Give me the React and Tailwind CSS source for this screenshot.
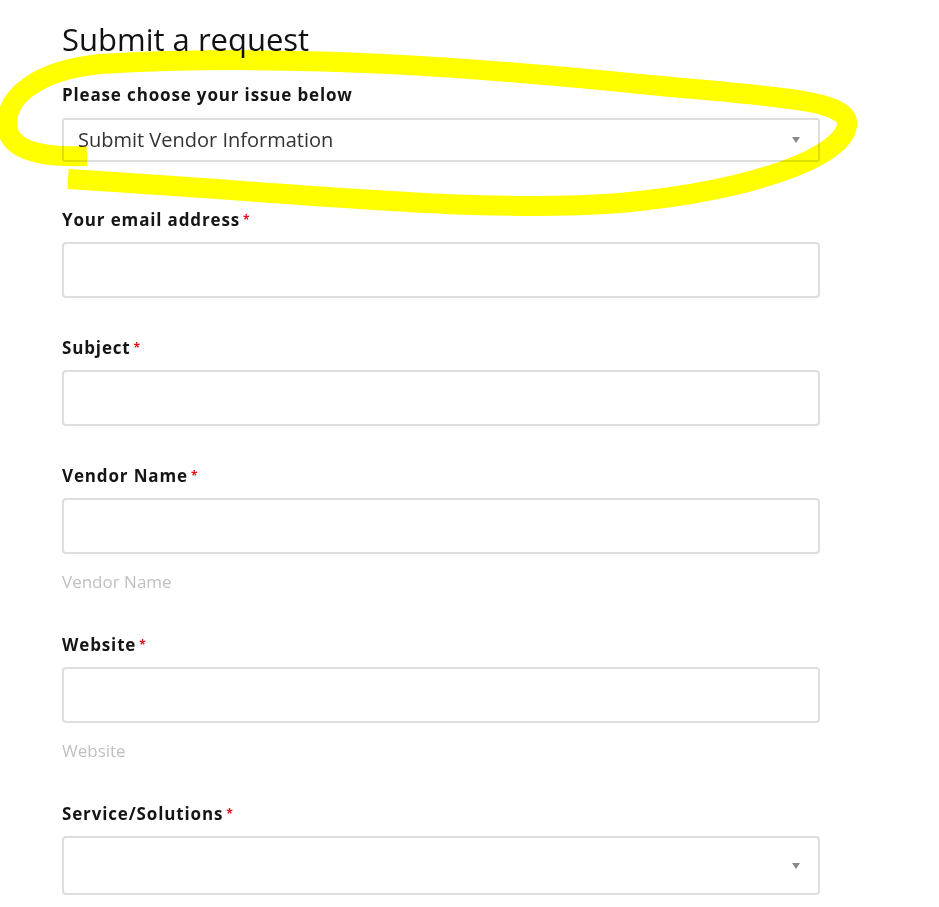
import React from "react";

const font = { fontFamily: '"Open Sans", "Noto Sans", sans-serif' };

function Arrow() {
  return (
    <svg width="8" height="6" viewBox="0 0 8 6" className="absolute right-[18px] top-1/2 -translate-y-1/2">
      <path d="M0 0 L8 0 L4 6 Z" fill="#8a8a8a" />
    </svg>
  );
}

function Label({ children, required = true }) {
  return (
    <div className="h-[20px] whitespace-nowrap text-[17px] leading-[20px] font-bold text-[#151515] tracking-[0.85px]">
      {children}
      {required && (
        <span className="relative -top-[2px] ml-[3px] text-[12px] tracking-normal text-[#e4101b]">*</span>
      )}
    </div>
  );
}

function Field({ label, hint, select, height = "h-[56px]", last }) {
  return (
    <div className={last ? "" : hint ? "" : "mb-[40px]"}>
      <Label>{label}</Label>
      <div
        className={`relative mt-[12px] w-[758px] ${height} rounded-[4px] border-2 border-[#dedede] bg-white`}
      >
        {select && <Arrow />}
      </div>
      {hint && (
        <div className="mt-[18px] mb-[43px] h-[20px] text-[17px] leading-[20px] text-[#c0c0c0]">
          {hint}
        </div>
      )}
    </div>
  );
}

export default function App() {
  return (
    <div className="relative min-h-[907px] w-full bg-white" style={font}>
      <div className="pl-[62px] pt-[21px]">
        <h1 className="text-[31px] leading-[36px] font-normal text-[#111]">Submit a request</h1>
        <div className="mt-[28px]">
          <Label required={false}>Please choose your issue below</Label>
        </div>
        <div className="relative mt-[13px] mb-[48px] flex h-[44px] w-[758px] items-center rounded-[3px] border-2 border-[#dedede] bg-white pl-[14px] text-[20px] text-[#333]">
          Submit Vendor Information
          <Arrow />
        </div>
        <Field label="Your email address" />
        <Field label="Subject" />
        <Field label="Vendor Name" hint="Vendor Name" />
        <Field label="Website" hint="Website" />
        <Field label="Service/Solutions" select height="h-[59px]" last />
      </div>
      <svg
        className="pointer-events-none absolute left-0 top-0 mix-blend-multiply"
        width="939"
        height="240"
        viewBox="0 0 939 240"
      >
        <path
          d="M 87 156 C 40 158, 8 150, 7 125 C 6 95, 40 70, 100 64 C 300 52, 500 70, 650 85 C 780 97, 850 100, 847 125 C 844 155, 760 190, 620 203 C 480 214, 300 193, 68 179"
          fill="none"
          stroke="#ffff00"
          strokeWidth="20"
          strokeLinecap="butt"
          strokeLinejoin="round"
        />
      </svg>
    </div>
  );
}
